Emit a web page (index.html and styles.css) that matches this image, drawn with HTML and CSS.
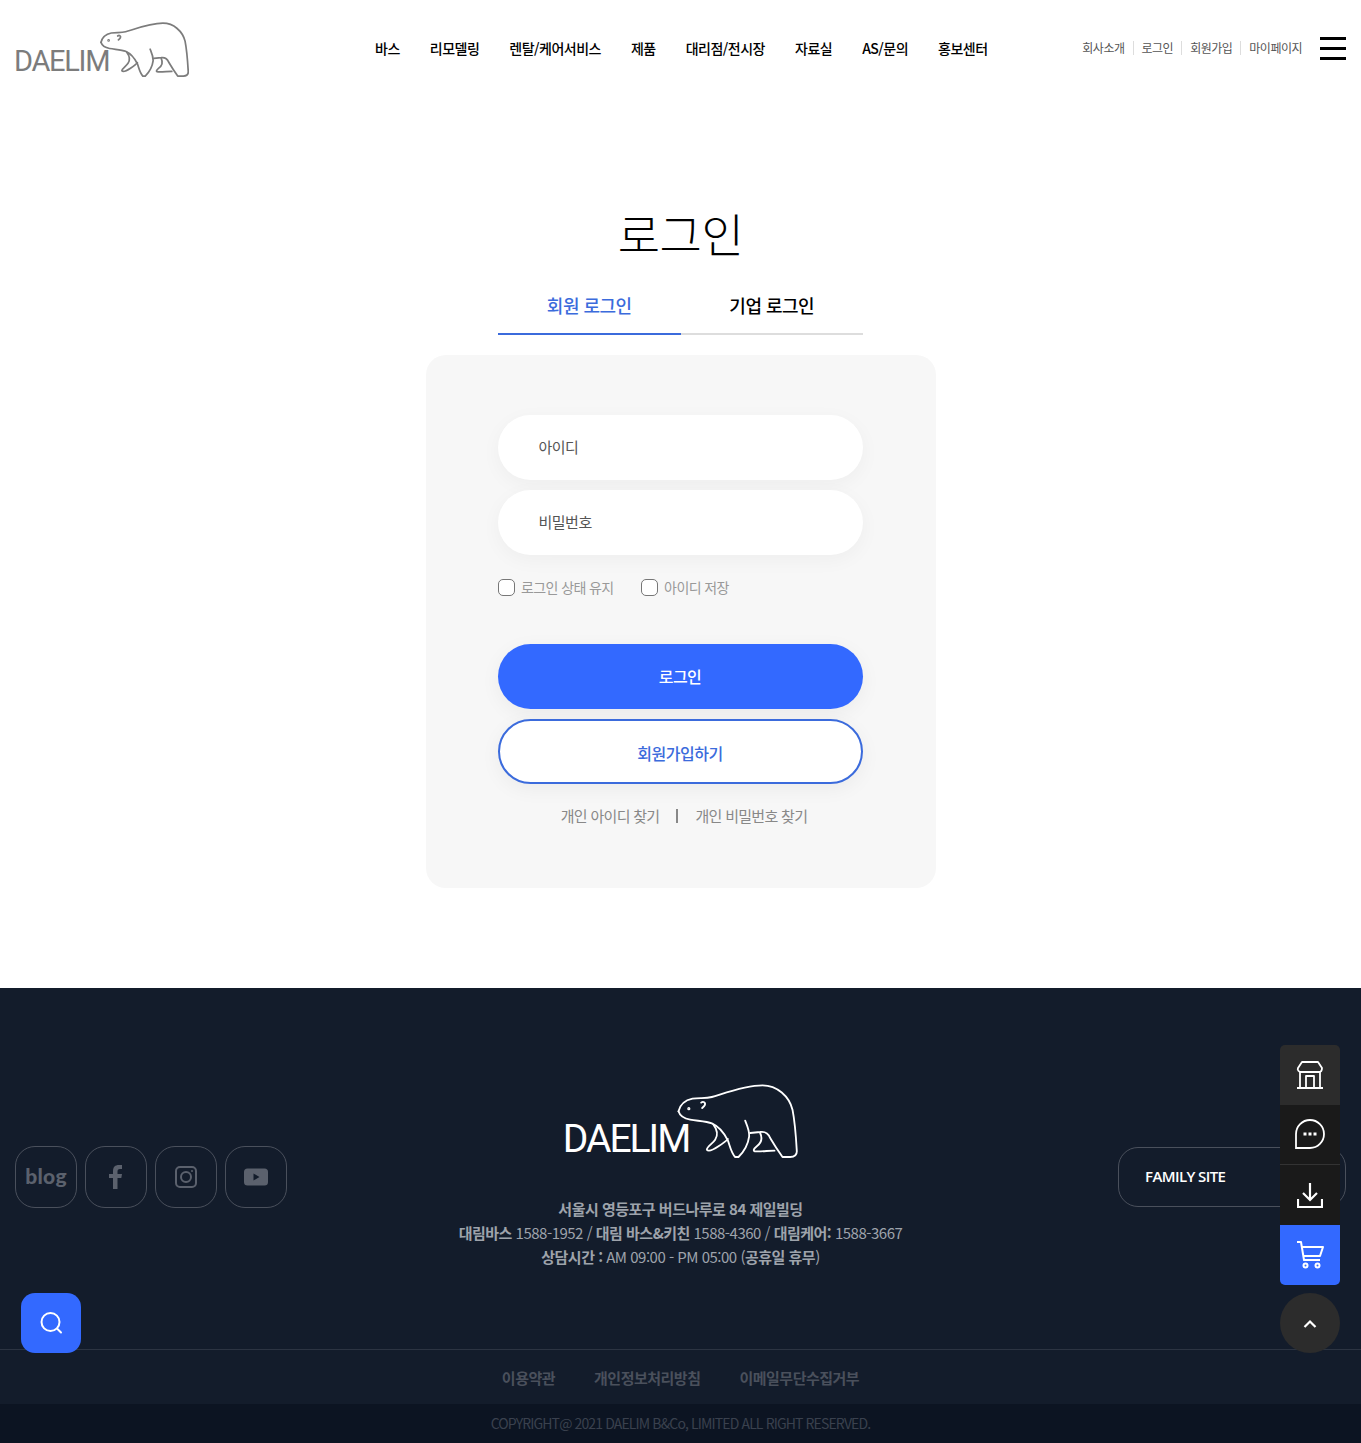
FILE: index.html
```html
<!DOCTYPE html>
<html lang="ko">
<head>
    <meta charset="UTF-8">
    <meta name="viewport" content="width=device-width, initial-scale=1">
    <title>로그인 | DAELIM</title>
    <link rel="stylesheet" href="styles.css">
</head>
<body>

<svg class="defs" width="0" height="0">
    <symbol id="bear" viewBox="416 43 362 222">
        <path d="M420 125C424 108 438 92 462 87C482 83 500 88 520 82C560 70 620 47 672 47C716 47 752 80 762 120C770 160 773 210 775 245C775 258 768 262 755 262L732 262C722 248 705 222 695 205C690 192 680 185 665 187L635 190"/>
        <path d="M420 125C424 138 436 147 455 150C480 154 505 155 520 161C545 172 558 192 568 212C574 228 578 250 590 262L600 262C612 250 628 230 632 200C633 182 626 168 620 153"/>
        <path d="M525 165C536 180 540 195 530 210C522 222 505 232 505 240C510 247 528 238 540 230C552 222 562 215 568 208"/>
        <path d="M665 190C672 205 668 220 655 230C645 238 642 245 652 245C670 246 690 243 708 243"/>
        <path d="M488 99C494 94 502 98 499 106C497 110 494 112 491 115"/>
        <circle cx="451" cy="117" r="2"/>
    </symbol>
</svg>

<header class="header">
    <a class="logo" href="#">
        <span class="logo-text">DAELIM</span>
        <svg class="bear"><use href="#bear"/></svg>
    </a>
    <nav class="gnb">
        <a href="#">바스</a>
        <a href="#">리모델링</a>
        <a href="#">렌탈/케어서비스</a>
        <a href="#">제품</a>
        <a href="#">대리점/전시장</a>
        <a href="#">자료실</a>
        <a href="#">AS/문의</a>
        <a href="#">홍보센터</a>
    </nav>
    <div class="util">
        <a href="#">회사소개</a>
        <a href="#">로그인</a>
        <a href="#">회원가입</a>
        <a href="#">마이페이지</a>
    </div>
    <button class="burger" aria-label="메뉴"><i></i><i></i><i></i></button>
</header>

<main class="login">
    <h1 class="login-title">로그인</h1>
    <div class="tabs">
        <a class="tab on" href="#">회원 로그인</a>
        <a class="tab" href="#">기업 로그인</a>
    </div>
    <form class="login-box">
        <div class="field">아이디</div>
        <div class="field">비밀번호</div>
        <div class="checks">
            <label class="check"><i></i>로그인 상태 유지</label>
            <label class="check"><i></i>아이디 저장</label>
        </div>
        <button class="btn btn-blue" type="button">로그인</button>
        <button class="btn btn-line" type="button">회원가입하기</button>
        <div class="find">
            <a href="#">개인 아이디 찾기</a>
            <span class="bar"></span>
            <a href="#">개인 비밀번호 찾기</a>
        </div>
    </form>
</main>

<footer class="footer">
    <div class="footer-main">
        <div class="sns">
            <a href="#"><span class="blog">blog</span></a>
            <a href="#">
                <svg width="14" height="24" viewBox="0 0 14 24" fill="#5b616d"><path d="M4 24V13H0V9h4V6c0-4 2-6 6-6h3v4h-2C9 4 8.500 5 8.500 6.500V9H13l-.7 4H8.500v11z"/></svg>
            </a>
            <a href="#">
                <svg width="24" height="24" viewBox="0 0 24 24" fill="none" stroke="#5b616d" stroke-width="2"><rect x="2" y="2" width="20" height="20" rx="4"/><circle cx="12" cy="12" r="5"/><circle cx="18" cy="6" r="1" fill="#5b616d" stroke="none"/></svg>
            </a>
            <a href="#">
                <svg width="24" height="18" viewBox="0 0 24 18"><rect width="24" height="17" y=".5" rx="3.500" fill="#5b616d"/><path d="M9.500 5.500v7l6-3.500z" fill="#131c2b"/></svg>
            </a>
        </div>
        <div class="footer-info">
            <a class="logo-white" href="#">
                <span class="logo-text">DAELIM</span>
                <svg class="bear"><use href="#bear"/></svg>
            </a>
            <address class="address">
                <p><b>서울시 영등포구 버드나루로 84 제일빌딩</b></p>
                <p><b>대림바스</b> 1588-1952 / <b>대림 바스&amp;키친</b> 1588-4360 / <b>대림케어:</b> 1588-3667</p>
                <p><b>상담시간 :</b> AM 09:00 - PM 05:00 (<b>공휴일 휴무</b>)</p>
            </address>
        </div>
        <div class="family">FAMILY SITE</div>
    </div>
    <div class="footer-links">
        <a href="#">이용약관</a>
        <a href="#">개인정보처리방침</a>
        <a href="#">이메일무단수집거부</a>
    </div>
    <div class="copyright">COPYRIGHT@ 2021 DAELIM B&amp;Co, LIMITED ALL RIGHT RESERVED.</div>
</footer>

<a class="search-float" href="#" aria-label="검색">
    <svg width="24" height="24" viewBox="0 0 24 24" fill="none" stroke="#fff" stroke-width="2" stroke-linecap="round"><circle cx="11.500" cy="11" r="9"/><path d="M18.500 18l3.500 3.500"/></svg>
</a>

<div class="quick">
    <a class="q-gray" href="#">
        <svg width="28" height="28" viewBox="0 0 28 28" fill="none" stroke="#fff" stroke-width="1.800" stroke-linejoin="round"><path d="M6 1h16l4 6c0 2-1 4-3 4H5C3 11 1 9 2 7zM4 11v15M24 11v15M1 27h26M10 26V15h8v11"/></svg>
    </a>
    <a class="q-dark q-line" href="#">
        <svg width="30" height="30" viewBox="0 0 30 30" fill="none" stroke="#fff" stroke-width="1.800"><path d="M1 29V15a14 14 0 1 1 14 14z"/><path d="M8.500 15h3M13.500 15h3M18.500 15h3" stroke-width="3"/></svg>
    </a>
    <a class="q-dark" href="#">
        <svg width="26" height="26" viewBox="0 0 26 26" fill="none" stroke="#fff" stroke-width="2.200"><path d="M13 1v17M6 11l7 7 7-7M1 17v8h24v-8"/></svg>
    </a>
    <a class="q-blue" href="#">
        <svg width="28" height="28" viewBox="0 0 28 28" fill="none" stroke="#fff" stroke-width="2" stroke-linejoin="round"><path d="M1 1h4l3 18h16M6 6h21l-3 9H7.500"/><circle cx="9.500" cy="24.500" r="2"/><circle cx="21.500" cy="24.500" r="2"/></svg>
    </a>
</div>
<a class="top-btn" href="#" aria-label="위로">
    <svg width="14" height="10" viewBox="0 0 14 10" fill="none" stroke="#fff" stroke-width="2.200"><path d="M1.500 8L7 2.500 12.500 8"/></svg>
</a>

</body>
</html>
```

FILE: styles.css
```css
* {
    box-sizing: border-box;
}

body {
    margin: 0;
    font-family: "Noto Sans CJK KR", "Noto Sans", sans-serif;
    background-color: #fff;
    color: #111;
    letter-spacing: -0.5px;
}

a {
    color: inherit;
    text-decoration: none;
}

.defs {
    position: absolute;
}

/* 로고 (곰은 공통 심볼) */
.logo, .logo-white {
    display: flex;
    align-items: flex-end;
}

.logo-text {
    font-family: Roboto, sans-serif;
    line-height: 1;
}

.bear {
    fill: none;
    stroke: currentColor;
    stroke-linecap: round;
    stroke-linejoin: round;
}

/* 상단 헤더 */
.header {
    display: flex;
    align-items: center;
    height: 97px;
    padding: 0 15px;
}

.gnb, .util {
    margin-top: -2px;
}

.logo {
    flex: none;
    width: 176px;
    margin-top: 2px;
    color: #7c7c7c;
}

.logo .logo-text {
    font-size: 29px;
    letter-spacing: -1.300px;
    margin-bottom: 1px;
    margin-left: -1px;
}

.logo .bear {
    flex: none;
    width: 89px;
    height: 55px;
    margin-left: -9px;
    stroke-width: 7;
}

.gnb {
    display: flex;
    gap: 30px;
    margin-left: 184px;
    font-size: 14px;
    font-weight: 500;
    color: #000;
}

.util {
    display: flex;
    margin-left: auto;
    font-size: 12px;
    color: #555;
}

.util a {
    padding: 0 8px;
    border-left: 1px solid #ddd;
    line-height: 14px;
}

.util a:first-child {
    border-left: 0;
}

.burger {
    display: flex;
    flex-direction: column;
    gap: 7px;
    width: 26px;
    margin: 0 0 0 10px;
    padding: 0;
    border: 0;
    background: none;
}

.burger i {
    display: block;
    height: 3px;
    width: 100%;
    background-color: #000;
}

/* 로그인 */
.login {
    display: flex;
    flex-direction: column;
    align-items: center;
    height: 891px;
    padding-top: 100px;
}

.login-title {
    margin: 0;
    font-size: 46px;
    font-weight: 300;
    line-height: 70px;
    color: #000;
}

.tabs {
    display: flex;
    width: 365px;
    margin-top: 18px;
}

.tab {
    flex: 1;
    height: 50px;
    text-align: center;
    font-size: 18px;
    font-weight: 500;
    line-height: 40px;
    color: #000;
    border-bottom: 2px solid #ddd;
}

.tab.on {
    color: #3b6bdc;
    border-bottom-color: #3b6bdc;
}

.login-box {
    display: flex;
    flex-direction: column;
    width: 510px;
    height: 533px;
    margin-top: 20px;
    padding: 60px 73px 0 72px;
    background-color: #f7f7f7;
    border-radius: 20px;
}

.field {
    height: 65px;
    margin-bottom: 10px;
    padding-left: 41px;
    border-radius: 33px;
    background-color: #fff;
    box-shadow: 0 5px 20px rgba(0, 0, 0, 0.04);
    font-size: 15px;
    line-height: 63px;
    color: #555;
}

.checks {
    display: flex;
    gap: 27px;
    margin-top: 12px;
    height: 57px;
}

.check {
    display: flex;
    align-items: center;
    gap: 6.500px;
    height: 20px;
    font-size: 14px;
    letter-spacing: -0.600px;
    color: #999;
}

.check i {
    width: 17px;
    height: 17px;
    border: 1px solid #777;
    border-radius: 5px;
    background-color: #fff;
}

.btn {
    display: block;
    width: 100%;
    height: 65px;
    margin-top: 10px;
    border-radius: 33px;
    font-family: inherit;
    font-size: 16px;
    font-weight: 500;
    letter-spacing: -0.5px;
    box-shadow: 0 5px 20px rgba(0, 0, 0, 0.05);
}

.btn-blue {
    padding-bottom: 3px;
    border: 0;
    background-color: #3369ff;
    color: #fff;
}

.btn-line {
    padding-top: 3px;
    border: 2px solid #3b6bdc;
    background-color: #fff;
    color: #3b6bdc;
}

.find {
    display: flex;
    justify-content: center;
    align-items: center;
    gap: 17px;
    margin-top: 21px;
    padding-left: 8px;
    font-size: 15px;
    letter-spacing: -0.700px;
    color: #888;
}

.find .bar {
    width: 2px;
    height: 14px;
    background-color: #888;
}

/* 푸터 */
.footer {
    background-color: #131c2b;
    color: #9ea3ab;
}

.footer-main {
    display: grid;
    grid-template-columns: 1fr auto 1fr;
    height: 362px;
    padding: 0 15px;
    border-bottom: 1px solid #2c3442;
}

.sns {
    display: flex;
    gap: 8px;
    align-self: start;
    margin-top: 158px;
}

.sns a {
    display: flex;
    align-items: center;
    justify-content: center;
    width: 62px;
    height: 62px;
    border: 1px solid #4a505c;
    border-radius: 20px;
}

.blog {
    font-family: Lato, sans-serif;
    font-size: 21px;
    font-weight: 900;
    line-height: 1;
    margin-top: -3px;
    color: #5b616d;
    letter-spacing: 0.3px;
}

.footer-info {
    display: flex;
    flex-direction: column;
    align-items: center;
    padding-top: 96px;
}

.logo-white {
    color: #fff;
}

.logo-white .logo-text {
    font-size: 39px;
    letter-spacing: -2px;
    margin-bottom: -1px;
}

.logo-white .bear {
    flex: none;
    width: 121px;
    height: 74px;
    margin-left: -12px;
    stroke-width: 5.500;
}

.address {
    margin-top: 39px;
    font-style: normal;
    font-size: 15px;
    line-height: 24px;
    text-align: center;
}

.address p {
    margin: 0;
}

.address b {
    font-weight: 700;
}

.family {
    justify-self: end;
    align-self: start;
    width: 228px;
    height: 60px;
    margin-top: 159px;
    padding-left: 26px;
    border: 1px solid #4a505c;
    border-radius: 20px;
    font-family: "Open Sans", sans-serif;
    font-size: 15px;
    font-weight: 600;
    line-height: 56px;
    letter-spacing: -0.600px;
    color: #fff;
}

.footer-links {
    display: flex;
    justify-content: center;
    gap: 39px;
    height: 54px;
    font-size: 15px;
    font-weight: 700;
    line-height: 56px;
    color: #4a505c;
}

.copyright {
    height: 39px;
    background-color: #0c1422;
    text-align: center;
    font-size: 14px;
    letter-spacing: -0.870px;
    line-height: 39px;
    color: #3a414e;
}

/* 떠있는 버튼들 */
.search-float {
    position: absolute;
    left: 21px;
    top: 1293px;
    display: flex;
    align-items: center;
    justify-content: center;
    width: 60px;
    height: 60px;
    border-radius: 14px;
    background-color: #3369ff;
}

.quick {
    position: absolute;
    left: 1280px;
    top: 1045px;
    width: 60px;
    border-radius: 5px;
    overflow: hidden;
}

.quick a {
    display: flex;
    align-items: center;
    justify-content: center;
    height: 60px;
}

.q-gray { background-color: #2c2c2c; }
.q-dark { background-color: #1a1a1a; }
.q-blue { background-color: #3369ff; }
.q-line { border-bottom: 1px solid #333; padding-bottom: 2px; }

.top-btn {
    position: absolute;
    left: 1280px;
    top: 1293px;
    display: flex;
    align-items: center;
    justify-content: center;
    width: 60px;
    height: 60px;
    padding-top: 2px;
    border-radius: 50%;
    background-color: #2c2c2c;
}
```
